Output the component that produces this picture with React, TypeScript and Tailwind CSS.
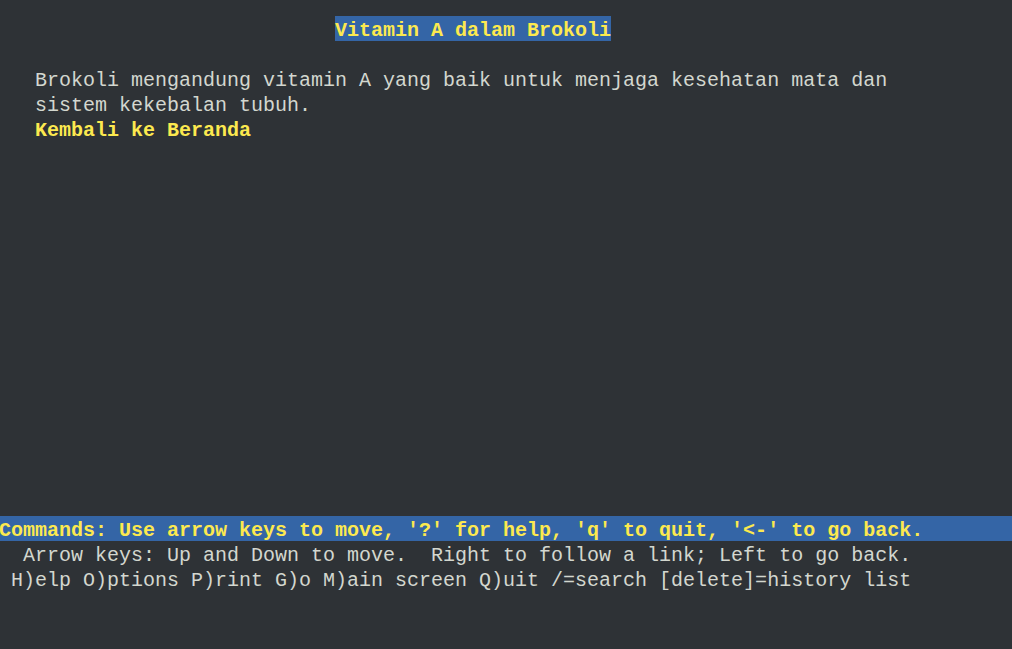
import React from 'react';

type Seg = { text: string; hl?: boolean; link?: boolean };

const blank: Seg[] = [];

const rows: { segs: Seg[]; bar?: boolean }[] = [
    { segs: [{ text: ' '.repeat(28) }, { text: 'Vitamin A dalam Brokoli', hl: true }] },
    { segs: blank },
    { segs: [{ text: '   Brokoli mengandung vitamin A yang baik untuk menjaga kesehatan mata dan' }] },
    { segs: [{ text: '   sistem kekebalan tubuh.' }] },
    { segs: [{ text: '   ' }, { text: 'Kembali ke Beranda', link: true }] },
    ...Array.from({ length: 15 }, () => ({ segs: blank })),
    { segs: [{ text: "Commands: Use arrow keys to move, '?' for help, 'q' to quit, '<-' to go back.", link: true }], bar: true },
    { segs: [{ text: '  Arrow keys: Up and Down to move.  Right to follow a link; Left to go back.' }] },
    { segs: [{ text: ' H)elp O)ptions P)rint G)o M)ain screen Q)uit /=search [delete]=history list' }] },
];

export default function App() {
    return (
        <div className="h-[649px] w-[1012px] overflow-hidden bg-[#2e3236] pt-[16px] font-['Courier_New','Liberation_Mono',monospace] text-[20px] leading-[29px] text-[#d3d7cf]">
            <div className="flex flex-col">
                {rows.map((row, i) => (
                    <div
                        key={i}
                        className={`h-[25px] whitespace-pre ${row.bar ? 'bg-[#3465a6]' : ''}`}
                    >
                        <div className="ml-[-1px] h-[25px]">
                            {row.segs.map((s, j) => (
                                <span
                                    key={j}
                                    className={
                                        s.hl
                                            ? 'inline-block h-[25px] bg-[#3465a6] font-bold text-[#fce94f]'
                                            : s.link
                                              ? 'font-bold text-[#fce94f]'
                                              : ''
                                    }
                                >
                                    {s.text}
                                </span>
                            ))}
                        </div>
                    </div>
                ))}
            </div>
        </div>
    );
}
